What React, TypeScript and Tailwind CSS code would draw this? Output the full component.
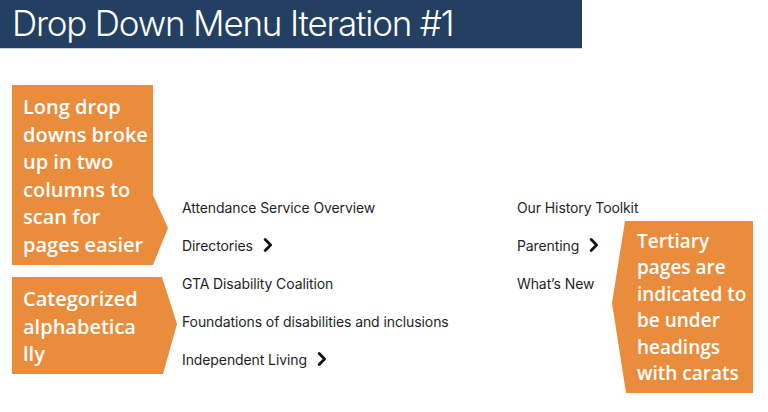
import React from 'react';

const Caret: React.FC = () => (
  <svg width="10" height="14" viewBox="0 0 10 14" className="shrink-0">
    <path d="M2.2 1.6 L7.6 7 L2.2 12.4" fill="none" stroke="#111" strokeWidth="2.8" strokeLinecap="round" strokeLinejoin="round" />
  </svg>
);

const MenuItem: React.FC<{ label: string; caret?: boolean }> = ({ label, caret }) => (
  <div className="flex h-[38px] items-center gap-[10px] whitespace-nowrap text-[14px] tracking-[-0.1px] text-[#1f1f1f]">
    <span>{label}</span>
    {caret && <Caret />}
  </div>
);

const calloutText = "font-['Open_Sans',sans-serif] font-semibold text-white whitespace-nowrap";

const App: React.FC = () => {
  return (
    <div className="h-[412px] w-[768px] overflow-hidden bg-white font-['Inter',sans-serif]">
      <div className="h-[49px] w-[582px] border-b border-[#c8d2dd] bg-[#233f62] pl-[12px]">
        <h1 className="text-[35px] font-light leading-[46px] tracking-[-1.2px] text-white">
          Drop Down Menu Iteration #1
        </h1>
      </div>

      <div className="flex">
        {/* left callouts */}
        <div className="ml-[12px] flex w-[165px] flex-col gap-[12px] pt-[36px]">
          <div className={`h-[180px] w-[156px] bg-[#e98c3b] pl-[11px] pt-[8px] text-[20px] leading-[27.6px] [clip-path:polygon(0_0,141px_0,141px_110px,156px_143px,141px_180px,0_180px)] ${calloutText}`}>
            Long drop<br />downs broke<br />up in two<br />columns to<br />scan for<br />pages easier
          </div>
          <div className={`h-[97px] w-[165px] bg-[#e98c3b] pl-[11px] pt-[8px] text-[20px] leading-[27.6px] [clip-path:polygon(0_0,150px_0,165px_47px,151px_97px,0_97px)] ${calloutText}`}>
            Categorized<br />alphabetica<br />lly
          </div>
        </div>

        {/* menu columns */}
        <div className="ml-[5px] w-[335px] pt-[139px]">
          <MenuItem label="Attendance Service Overview" />
          <MenuItem label="Directories" caret />
          <MenuItem label="GTA Disability Coalition" />
          <MenuItem label="Foundations of disabilities and inclusions" />
          <MenuItem label="Independent Living" caret />
        </div>
        <div className="w-[95px] pt-[139px]">
          <MenuItem label="Our History Toolkit" />
          <MenuItem label="Parenting" caret />
          <MenuItem label="What’s New" />
        </div>

        {/* right callout */}
        <div className="pt-[172px]">
          <div className={`h-[172px] w-[141px] bg-[#e98c3b] pl-[25px] pt-[7px] text-[19px] leading-[26.4px] [clip-path:polygon(13px_0,141px_0,141px_172px,14px_172px,0_82px)] ${calloutText}`}>
            Tertiary<br />pages are<br />indicated to<br />be under<br />headings<br />with carats
          </div>
        </div>
      </div>
    </div>
  );
};

export default App;
